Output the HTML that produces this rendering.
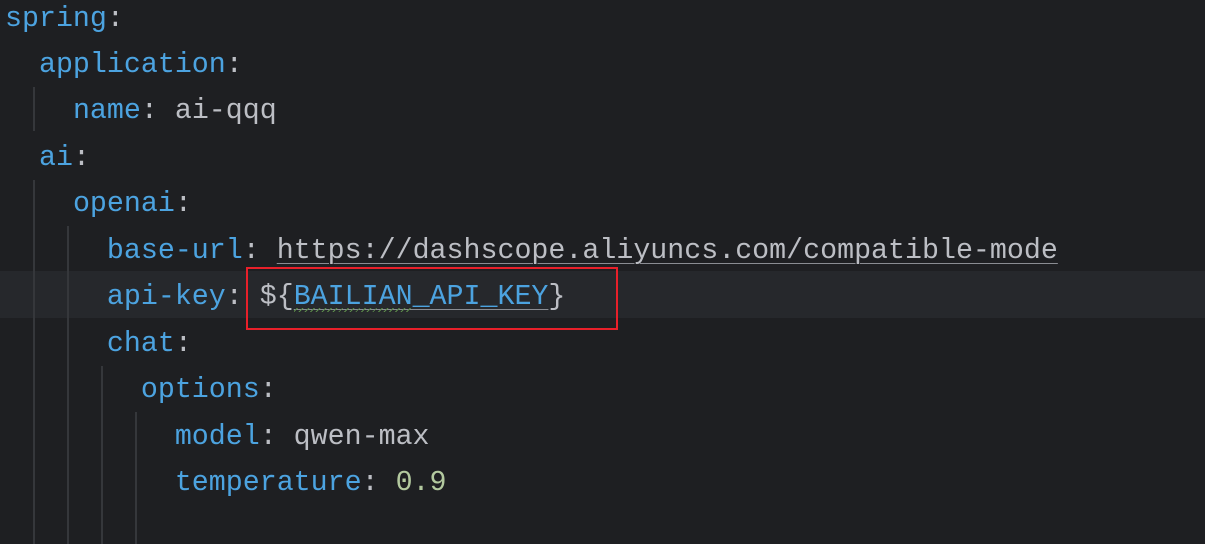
<!DOCTYPE html>
<html><head><style>
body{margin:0;width:1205px;height:544px;background:#1e1f22;overflow:hidden;position:relative;font-family:"Liberation Mono","DejaVu Sans Mono",monospace;font-size:28.3px;}
.l{position:absolute;left:5px;height:46.6px;line-height:46.6px;white-space:pre;color:#bcbec4}
.k{color:#4ca3e0}
.cur{position:absolute;left:0;width:1205px;top:271px;height:47px;background:#26282c}
.g{position:absolute;width:2px;background:#35373b}
.u{text-decoration:underline;text-decoration-color:#8a8c92;text-underline-offset:5px;text-decoration-thickness:1px}
.box{position:absolute;left:246px;top:267px;width:368px;height:59px;border:2px solid #e8202a}
.sq{position:absolute;left:294px;top:308px;width:117px;height:4px;background:repeating-linear-gradient(135deg,transparent 0 2px,#5b8a4a 2px 3px,transparent 3px 4px)}
</style></head><body>
<div class="cur"></div>
<div class="g" style="left:33px;top:87px;height:44px"></div>
<div class="g" style="left:33px;top:180px;height:364px"></div>
<div class="g" style="left:67px;top:226px;height:318px"></div>
<div class="g" style="left:101px;top:366px;height:178px"></div>
<div class="g" style="left:135px;top:412px;height:132px"></div>
<div class="l" style="top:-4px"><span class="k">spring</span>:</div>
<div class="l" style="top:42px">  <span class="k">application</span>:</div>
<div class="l" style="top:88px">    <span class="k">name</span>: ai-qqq</div>
<div class="l" style="top:135px">  <span class="k">ai</span>:</div>
<div class="l" style="top:181px">    <span class="k">openai</span>:</div>
<div class="l" style="top:228px">      <span class="k">base-url</span>: <span class="u">https://dashscope.aliyuncs.com/compatible-mode</span></div>
<div class="l" style="top:274px">      <span class="k">api-key</span>: ${<span class="k u">BAILIAN_API_KEY</span>}</div>
<div class="l" style="top:321px">      <span class="k">chat</span>:</div>
<div class="l" style="top:367px">        <span class="k">options</span>:</div>
<div class="l" style="top:414px">          <span class="k">model</span>: qwen-max</div>
<div class="l" style="top:460px">          <span class="k">temperature</span>: <span style="color:#b3c99f">0.9</span></div>
<div class="sq"></div>
<div class="box"></div>
</body></html>
